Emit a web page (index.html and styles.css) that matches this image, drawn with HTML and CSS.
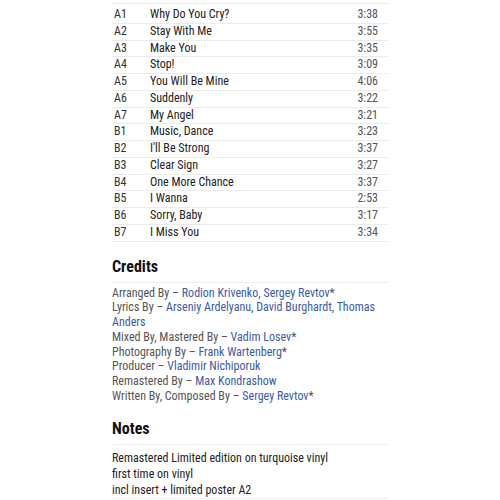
FILE: index.html
```html
<!DOCTYPE html>
<html>
<head>
<meta charset="utf-8">
<link rel="stylesheet" href="styles.css">
</head>
<body>
<main class="page">
  <table class="tracklist">
    <tbody>
      <tr><td class="pos">A1</td><td class="title">Why Do You Cry?</td><td class="dur">3:38</td></tr>
      <tr><td class="pos">A2</td><td class="title">Stay With Me</td><td class="dur">3:55</td></tr>
      <tr><td class="pos">A3</td><td class="title">Make You</td><td class="dur">3:35</td></tr>
      <tr><td class="pos">A4</td><td class="title">Stop!</td><td class="dur">3:09</td></tr>
      <tr><td class="pos">A5</td><td class="title">You Will Be Mine</td><td class="dur">4:06</td></tr>
      <tr><td class="pos">A6</td><td class="title">Suddenly</td><td class="dur">3:22</td></tr>
      <tr><td class="pos">A7</td><td class="title">My Angel</td><td class="dur">3:21</td></tr>
      <tr><td class="pos">B1</td><td class="title">Music, Dance</td><td class="dur">3:23</td></tr>
      <tr><td class="pos">B2</td><td class="title">I'll Be Strong</td><td class="dur">3:37</td></tr>
      <tr><td class="pos">B3</td><td class="title">Clear Sign</td><td class="dur">3:27</td></tr>
      <tr><td class="pos">B4</td><td class="title">One More Chance</td><td class="dur">3:37</td></tr>
      <tr><td class="pos">B5</td><td class="title">I Wanna</td><td class="dur">2:53</td></tr>
      <tr><td class="pos">B6</td><td class="title">Sorry, Baby</td><td class="dur">3:17</td></tr>
      <tr><td class="pos">B7</td><td class="title">I Miss You</td><td class="dur">3:34</td></tr>
    </tbody>
  </table>

  <section class="section credits">
    <h2 class="section-title">Credits</h2>
    <ul class="credit-list">
      <li>Arranged By – <a href="#">Rodion Krivenko</a>, <a href="#">Sergey Revtov</a>*</li>
      <li>Lyrics By – <a href="#">Arseniy Ardelyanu</a>, <a href="#">David Burghardt</a>, <a href="#">Thomas Anders</a></li>
      <li>Mixed By, Mastered By – <a href="#">Vadim Losev</a>*</li>
      <li>Photography By – <a href="#">Frank Wartenberg</a>*</li>
      <li>Producer – <a href="#">Vladimir Nichiporuk</a></li>
      <li>Remastered By – <a href="#">Max Kondrashow</a></li>
      <li>Written By, Composed By – <a href="#">Sergey Revtov</a>*</li>
    </ul>
  </section>

  <section class="section notes">
    <h2 class="section-title">Notes</h2>
    <div class="notes-body">
      <p>Remastered Limited edition on turquoise vinyl</p>
      <p>first time on vinyl</p>
      <p>incl insert + limited poster A2</p>
    </div>
  </section>
</main>
</body>
</html>
```

FILE: styles.css
```css
html, body {
  margin: 0;
  padding: 0;
  background: #fff;
}
body {
  font-family: Roboto, "Noto Sans", Arial, sans-serif;
  font-size: 12px;
  font-stretch: 87.5%;
  color: #333;
}
.page {
  width: 276px;
  margin: 0 auto;
  padding-top: 3px;
}
.tracklist {
  width: 100%;
  border-collapse: collapse;
  border-top: 1px solid #ececec;
}
.tracklist tr {
  border-bottom: 1px solid #ececec;
}
.tracklist td {
  padding: 0;
  height: 15.77px;
  line-height: 15.77px;
}
.tracklist tr:first-child td {
  padding-top: 3px;
}
.tracklist .pos {
  width: 36px;
  padding-left: 2px;
  color: #333;
}
.tracklist .title {
  color: #222;
}
.tracklist .dur {
  text-align: right;
  padding-right: 10px;
  color: #555;
}
.section {
  margin-top: 16px;
}
.section-title {
  margin: 0;
  font-size: 16px;
  font-weight: 700;
  color: #111;
  line-height: 18px;
  padding-bottom: 6px;
  border-bottom: 1px solid #eee;
}
.credit-list {
  list-style: none;
  margin: 0;
  padding: 3px 10px 0 0;
  color: #555;
  line-height: 14.7px;
}
.credit-list a {
  color: #3a5ba6;
  text-decoration: none;
}
.notes {
  margin-top: 17px;
}
.notes-body {
  padding: 5px 0 0;
  border-bottom: 1px solid #eee;
  color: #222;
}
.notes-body p {
  margin: 0;
  line-height: 16px;
}
```
